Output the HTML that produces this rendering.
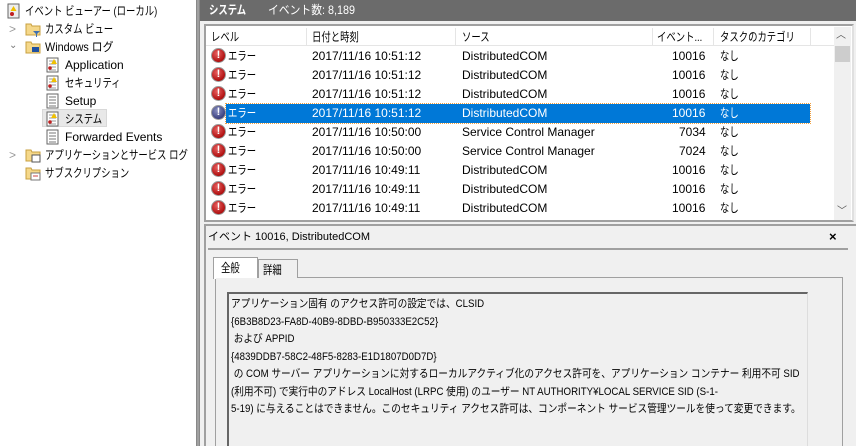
<!DOCTYPE html>
<html><head><meta charset="utf-8"><style>
*{margin:0;padding:0;box-sizing:border-box}
body{width:856px;height:446px;overflow:hidden;background:#f0f0f0;font-family:"Liberation Sans","Noto Sans CJK JP",sans-serif;font-size:12px;line-height:15px;color:#000;position:relative}
.a{position:absolute;white-space:nowrap}
.j{transform:scaleX(.78);transform-origin:left center}
.k{transform:scaleX(.9);transform-origin:left center}
.ico{position:absolute;width:16px;height:16px}
.err{position:absolute;width:15px;height:15px;border-radius:50%;background:radial-gradient(circle at 40% 35%,#e86060,#b01010 70%,#801010);border:1px solid #9a9a9a;color:#fff;font-weight:bold;font-size:11px;line-height:13px;text-align:center}
.err.s{background:radial-gradient(circle at 40% 35%,#8a90c0,#3a4080 70%)}
</style></head><body>
<div class="a" style="left:0;top:0;width:196px;height:446px;background:#fff"></div>
<div class="a" style="left:196px;top:0;width:4px;height:446px;background:#a0a0a0;border-left:1px solid #888;border-right:1px solid #888"></div>

<svg class="ico" style="left:6px;top:3px" viewBox="0 0 16 16"><rect x="2" y="1" width="11" height="14" fill="#eee" stroke="#666"/><path d="M7.5 3l3 5h-6z" fill="#f0c000"/><circle cx="6" cy="11" r="2" fill="#c02020"/></svg>
<div class="a j" style="left:25px;top:4px">イベント ビューアー (ローカル)</div>
<div class="a" style="left:9px;top:22px;color:#999">&gt;</div>
<svg class="ico" style="left:25px;top:21px" viewBox="0 0 16 16"><path d="M1 3h5l1 2h8v9H1z" fill="#f5d88a" stroke="#c8a040"/><path d="M8 10h7l-3 3v3h-1v-3z" fill="#4070b0"/></svg>
<div class="a j" style="left:45px;top:22px">カスタム ビュー</div>
<div class="a" style="left:9px;top:38px;color:#777;font-size:10px">⌄</div>
<svg class="ico" style="left:25px;top:39px" viewBox="0 0 16 16"><path d="M1 3h5l1 2h8v9H1z" fill="#f5d88a" stroke="#c8a040"/><rect x="7" y="8" width="7" height="5" fill="#2050a0"/></svg>
<div class="a k" style="left:45px;top:40px">Windows ログ</div>
<svg class="ico" style="left:45px;top:57px" viewBox="0 0 16 16"><rect x="2" y="1" width="11" height="14" fill="#fff" stroke="#666"/><path d="M4 4h7M4 7h7M4 10h7M4 13h7" stroke="#999"/><path d="M9 2l3 5H6z" fill="#f0c000"/><circle cx="5" cy="11" r="1.8" fill="#c02020"/></svg>
<div class="a" style="left:65px;top:58px">Application</div>
<svg class="ico" style="left:45px;top:75px" viewBox="0 0 16 16"><rect x="2" y="1" width="11" height="14" fill="#fff" stroke="#666"/><path d="M4 4h7M4 7h7M4 10h7M4 13h7" stroke="#999"/><path d="M9 2l3 5H6z" fill="#f0c000"/><circle cx="5" cy="11" r="1.8" fill="#c02020"/></svg>
<div class="a j" style="left:65px;top:76px">セキュリティ</div>
<svg class="ico" style="left:45px;top:93px" viewBox="0 0 16 16"><rect x="2" y="1" width="11" height="14" fill="#fff" stroke="#666"/><path d="M4 4h7M4 7h7M4 10h7M4 13h7" stroke="#777"/></svg>
<div class="a" style="left:65px;top:94px">Setup</div>
<div class="a" style="left:42px;top:109px;width:65px;height:18px;background:#e8e8e8;border:1px solid #d8d8d8"></div>
<svg class="ico" style="left:45px;top:111px" viewBox="0 0 16 16"><rect x="2" y="1" width="11" height="14" fill="#fff" stroke="#666"/><path d="M4 4h7M4 7h7M4 10h7M4 13h7" stroke="#999"/><path d="M9 2l3 5H6z" fill="#f0c000"/><circle cx="5" cy="11" r="1.8" fill="#c02020"/></svg>
<div class="a j" style="left:65px;top:112px">システム</div>
<svg class="ico" style="left:45px;top:129px" viewBox="0 0 16 16"><rect x="2" y="1" width="11" height="14" fill="#fff" stroke="#666"/><path d="M4 4h7M4 7h7M4 10h7M4 13h7" stroke="#777"/></svg>
<div class="a" style="left:65px;top:130px">Forwarded Events</div>
<div class="a" style="left:9px;top:148px;color:#999">&gt;</div>
<svg class="ico" style="left:25px;top:147px" viewBox="0 0 16 16"><path d="M1 3h5l1 2h8v9H1z" fill="#f5d88a" stroke="#c8a040"/><rect x="7" y="8" width="8" height="7" fill="#fff" stroke="#555"/></svg>
<div class="a j" style="left:45px;top:148px">アプリケーションとサービス ログ</div>
<svg class="ico" style="left:25px;top:165px" viewBox="0 0 16 16"><path d="M1 3h5l1 2h8v9H1z" fill="#f5d88a" stroke="#c8a040"/><rect x="6" y="8" width="9" height="7" fill="#fff" stroke="#777"/><path d="M8 11h5" stroke="#d04040"/></svg>
<div class="a j" style="left:45px;top:166px">サブスクリプション</div>

<div class="a" style="left:200px;top:0;width:656px;height:21px;background:#6b6b6b"></div>
<div class="a j" style="left:209px;top:3px;color:#fff;font-weight:bold">システム</div>
<div class="a k" style="left:268px;top:3px;color:#fff">イベント数: 8,189</div>

<div class="a" style="left:204px;top:24px;width:650px;height:198px;border:2px solid #a0a0a0;border-right-color:#e0e0e0;background:#fff"></div>
<div class="a" style="left:206px;top:28px;width:628px;height:18px;background:#fff;border-bottom:1px solid #e5e5e5"></div>
<div class="a" style="left:306px;top:28px;width:1px;height:18px;background:#e5e5e5"></div>
<div class="a" style="left:455px;top:28px;width:1px;height:18px;background:#e5e5e5"></div>
<div class="a" style="left:652px;top:28px;width:1px;height:18px;background:#e5e5e5"></div>
<div class="a" style="left:713px;top:28px;width:1px;height:18px;background:#e5e5e5"></div>
<div class="a" style="left:810px;top:28px;width:1px;height:18px;background:#e5e5e5"></div>
<div class="a j" style="left:211px;top:30px">レベル</div>
<div class="a j" style="left:312px;top:30px">日付と時刻</div>
<div class="a j" style="left:462px;top:30px">ソース</div>
<div class="a j" style="left:657px;top:30px">イベント...</div>
<div class="a j" style="left:720px;top:30px">タスクのカテゴリ</div>
<div class="a" style="left:834px;top:27px;width:17px;height:193px;background:#f0f0f0"></div>
<div class="a" style="left:836px;top:28px;color:#555;font-size:10px">︿</div>
<div class="a" style="left:835px;top:46px;width:15px;height:16px;background:#cdcdcd"></div>
<div class="a" style="left:837px;top:204px;color:#555;font-size:10px">﹀</div>

<div class="a" style="left:226px;top:104px;width:584px;height:19px;background:#0078d7;outline:1px dotted #f0a040"></div>

<div style="position:absolute;left:0;top:0">
<div class="err" style="left:211px;top:48px">!</div><div class="a j" style="left:228px;top:49px">エラー</div><div class="a" style="left:312px;top:49px">2017/11/16 10:51:12</div><div class="a" style="left:462px;top:49px">DistributedCOM</div><div class="a" style="left:672px;top:49px">10016</div><div class="a j" style="left:720px;top:49px">なし</div>
<div class="err" style="left:211px;top:67px">!</div><div class="a j" style="left:228px;top:68px">エラー</div><div class="a" style="left:312px;top:68px">2017/11/16 10:51:12</div><div class="a" style="left:462px;top:68px">DistributedCOM</div><div class="a" style="left:672px;top:68px">10016</div><div class="a j" style="left:720px;top:68px">なし</div>
<div class="err" style="left:211px;top:86px">!</div><div class="a j" style="left:228px;top:87px">エラー</div><div class="a" style="left:312px;top:87px">2017/11/16 10:51:12</div><div class="a" style="left:462px;top:87px">DistributedCOM</div><div class="a" style="left:672px;top:87px">10016</div><div class="a j" style="left:720px;top:87px">なし</div>
<div class="err s" style="left:211px;top:105px">!</div><div class="a j" style="left:228px;top:106px;color:#fff">エラー</div><div class="a" style="left:312px;top:106px;color:#fff">2017/11/16 10:51:12</div><div class="a" style="left:462px;top:106px;color:#fff">DistributedCOM</div><div class="a" style="left:672px;top:106px;color:#fff">10016</div><div class="a j" style="left:720px;top:106px;color:#fff">なし</div>
<div class="err" style="left:211px;top:124px">!</div><div class="a j" style="left:228px;top:125px">エラー</div><div class="a" style="left:312px;top:125px">2017/11/16 10:50:00</div><div class="a" style="left:462px;top:125px">Service Control Manager</div><div class="a" style="left:679px;top:125px">7034</div><div class="a j" style="left:720px;top:125px">なし</div>
<div class="err" style="left:211px;top:143px">!</div><div class="a j" style="left:228px;top:144px">エラー</div><div class="a" style="left:312px;top:144px">2017/11/16 10:50:00</div><div class="a" style="left:462px;top:144px">Service Control Manager</div><div class="a" style="left:679px;top:144px">7024</div><div class="a j" style="left:720px;top:144px">なし</div>
<div class="err" style="left:211px;top:162px">!</div><div class="a j" style="left:228px;top:163px">エラー</div><div class="a" style="left:312px;top:163px">2017/11/16 10:49:11</div><div class="a" style="left:462px;top:163px">DistributedCOM</div><div class="a" style="left:672px;top:163px">10016</div><div class="a j" style="left:720px;top:163px">なし</div>
<div class="err" style="left:211px;top:181px">!</div><div class="a j" style="left:228px;top:182px">エラー</div><div class="a" style="left:312px;top:182px">2017/11/16 10:49:11</div><div class="a" style="left:462px;top:182px">DistributedCOM</div><div class="a" style="left:672px;top:182px">10016</div><div class="a j" style="left:720px;top:182px">なし</div>
<div class="err" style="left:211px;top:200px">!</div><div class="a j" style="left:228px;top:201px">エラー</div><div class="a" style="left:312px;top:201px">2017/11/16 10:49:11</div><div class="a" style="left:462px;top:201px">DistributedCOM</div><div class="a" style="left:672px;top:201px">10016</div><div class="a j" style="left:720px;top:201px">なし</div>
</div>

<div class="a" style="left:204px;top:224px;width:652px;height:222px;border-top:2px solid #a0a0a0;border-left:2px solid #a0a0a0;background:#f0f0f0"></div>
<div class="a" style="left:208px;top:230px;font-size:11px">イベント 10016, DistributedCOM</div>
<div class="a" style="left:829px;top:229px;font-weight:bold;font-size:13px">×</div>
<div class="a" style="left:208px;top:248px;width:640px;height:2px;background:#a0a0a0"></div>
<div class="a" style="left:215px;top:277px;width:628px;height:169px;border:1px solid #a0a0a0;border-bottom:none;background:#f0f0f0"></div>
<div class="a" style="left:258px;top:259px;width:40px;height:19px;border:1px solid #a0a0a0;border-bottom:none;background:#f0f0f0"></div>
<div class="a j" style="left:263px;top:263px">詳細</div>
<div class="a" style="left:213px;top:257px;width:45px;height:22px;border:1px solid #a0a0a0;border-bottom:none;background:#fff"></div>
<div class="a j" style="left:221px;top:261px">全般</div>
<div class="a" style="left:216px;top:278px;width:626px;height:168px;background:#f0f0f0"></div>
<div class="a" style="left:227px;top:292px;width:581px;height:154px;border-left:2px solid #666;border-top:2px solid #666;border-right:1px solid #ddd;background:#f0f0f0"></div>
<div class="a" style="left:231px;top:296px;font-size:11px;line-height:17.5px;white-space:pre;transform:scaleX(.88);transform-origin:left top">アプリケーション固有 のアクセス許可の設定では、CLSID 
{6B3B8D23-FA8D-40B9-8DBD-B950333E2C52}
 および APPID 
{4839DDB7-58C2-48F5-8283-E1D1807D0D7D}
 の COM サーバー アプリケーションに対するローカルアクティブ化のアクセス許可を、アプリケーション コンテナー 利用不可 SID
(利用不可) で実行中のアドレス LocalHost (LRPC 使用) のユーザー NT AUTHORITY¥LOCAL SERVICE SID (S-1-
5-19) に与えることはできません。このセキュリティ アクセス許可は、コンポーネント サービス管理ツールを使って変更できます。</div>
</body></html>
